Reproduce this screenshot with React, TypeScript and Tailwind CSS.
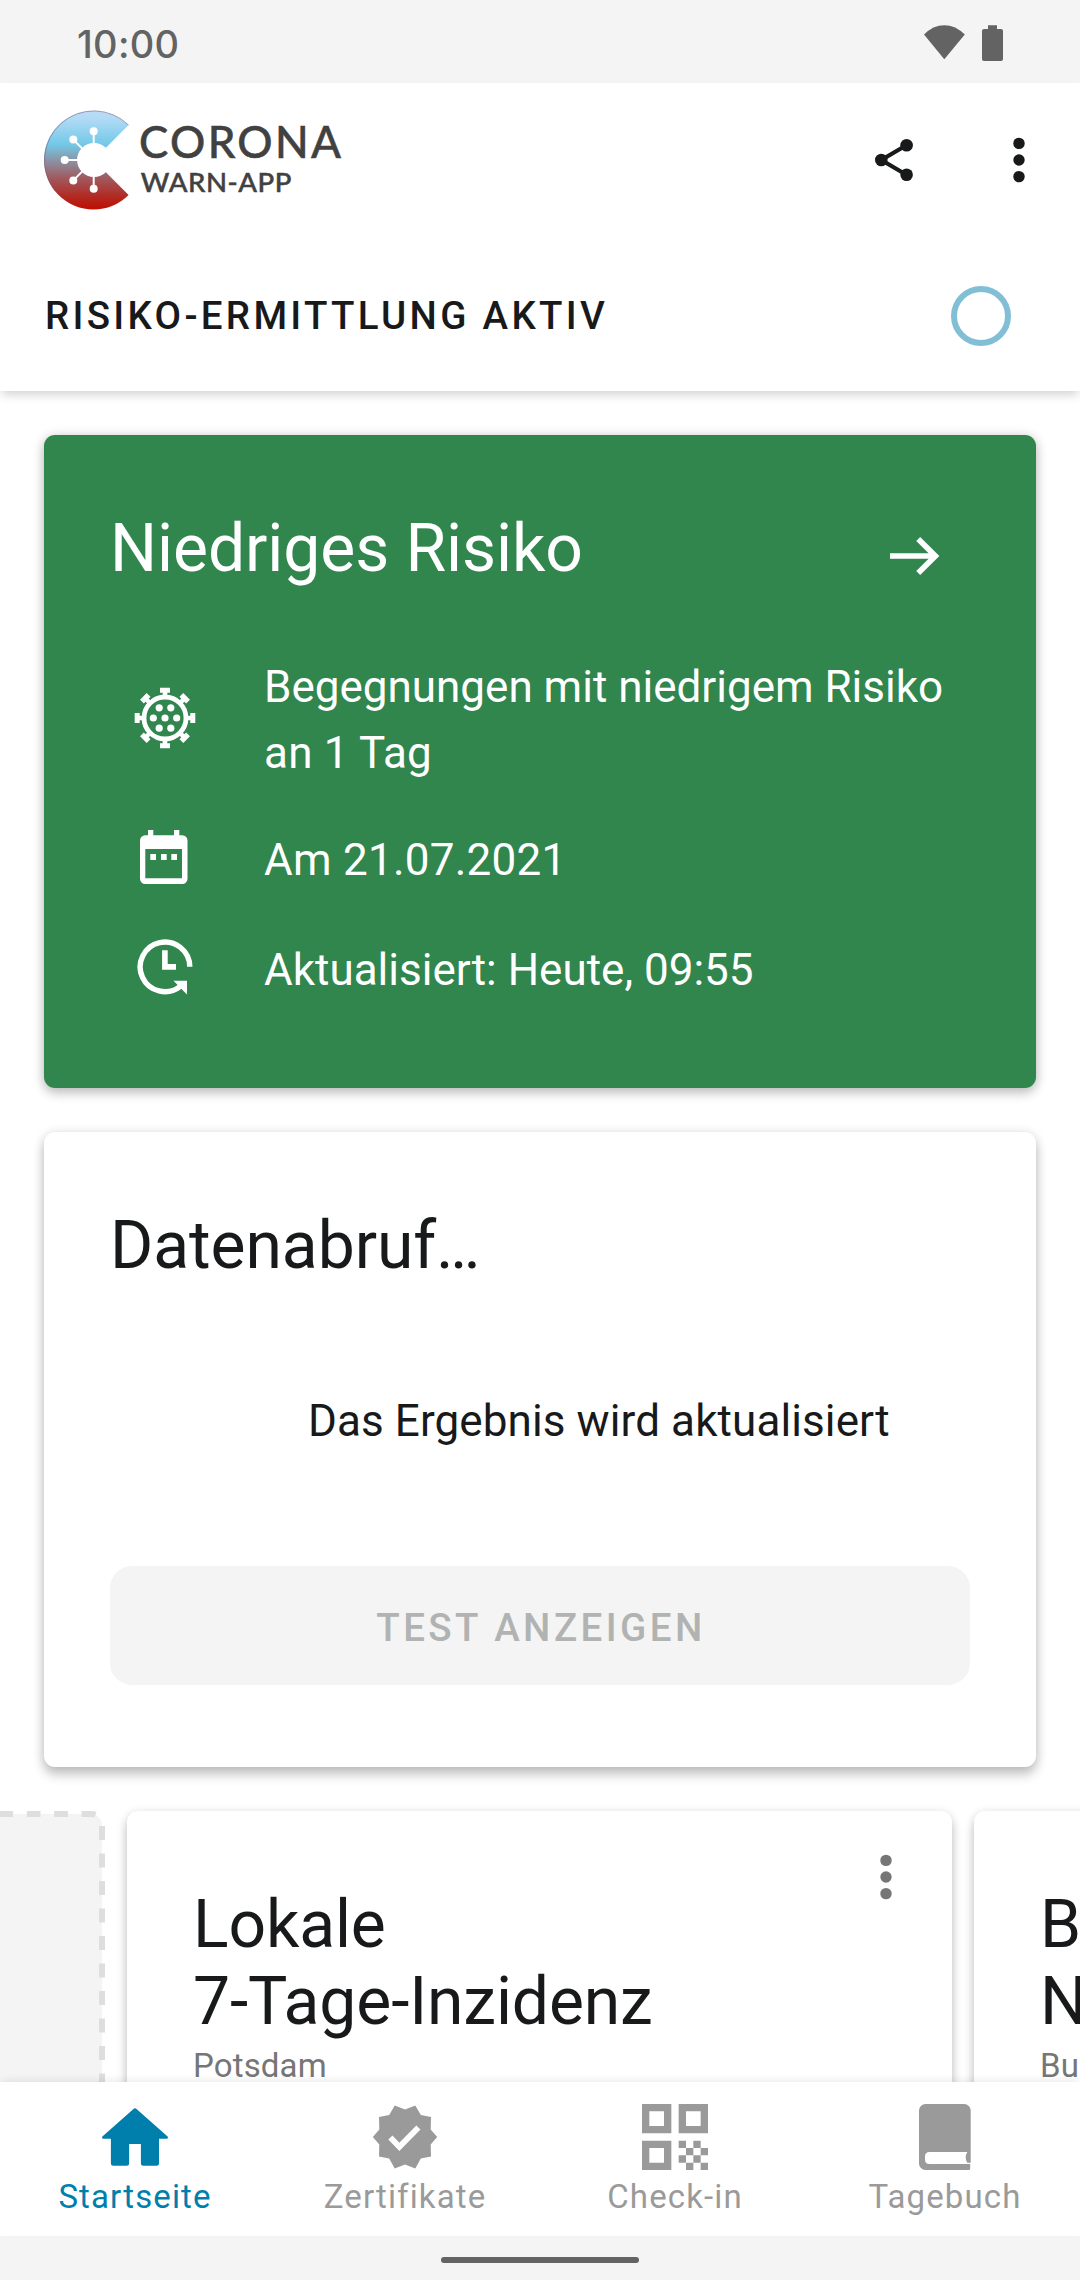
import type { ReactNode } from "react";

function StatusBar() {
  return (
    <div className="flex h-[83px] shrink-0 items-center justify-between bg-[#f4f4f4] pr-[77px] pl-[77px]">
      <span className="pt-[5px] font-[Inter,sans-serif] text-[38px] leading-[46px] font-medium tracking-[0.3px] text-[#636363]">
        10:00
      </span>
      <svg className="h-[40px] w-[80px]" viewBox="923 22 80 40" fill="#636363">
        <path d="M944.3 59.3 924 34.6Q933 25.2 944.3 25.2T964.8 34.6Z" />
        <path d="M988 25.3h9v3.6h4a2 2 0 0 1 2 2v28a2 2 0 0 1-2 2h-17a2 2 0 0 1-2-2v-28a2 2 0 0 1 2-2h4z" />
      </svg>
    </div>
  );
}

function Logo() {
  return (
    <svg className="h-[100px] w-[300px]" viewBox="44 110 300 100">
      <defs>
        <linearGradient id="logo" x1="0" y1="0" x2="0" y2="1">
          <stop offset="0" stopColor="#bcdcf8" />
          <stop offset="0.08" stopColor="#b2dbf5" />
          <stop offset="0.34" stopColor="#73c9e8" />
          <stop offset="0.5" stopColor="#8a95a8" />
          <stop offset="0.68" stopColor="#a05a60" />
          <stop offset="0.86" stopColor="#b02c25" />
          <stop offset="1" stopColor="#c00d00" />
        </linearGradient>
      </defs>
      <path
        d="M128.6 125.1A49.5 49.5 0 1 0 128.6 194.9L105.9 172.2A17 17 0 1 1 105.9 147.8Z"
        fill="url(#logo)"
      />
      <path d="M128.6 125.1A49.5 49.5 0 0 0 55 191" fill="none" stroke="#7d5068" strokeOpacity="0.6" strokeWidth="0.8" />
      <g stroke="#fff" strokeWidth="2">
        <path d="M93.7 131v14M73.3 139.6l10 10M64.7 160h14M73.3 180.4l10-10M93.7 189v-14" />
      </g>
      <g fill="#fff">
        <circle cx="93.7" cy="131.3" r="4" />
        <circle cx="73.3" cy="139.6" r="4" />
        <circle cx="64.7" cy="160" r="4" />
        <circle cx="73.3" cy="180.4" r="4" />
        <circle cx="93.7" cy="188.7" r="4" />
      </g>
      <g fill="#414141" stroke="#414141" strokeWidth="0.5" fontFamily="Lato, sans-serif" fontWeight="500">
        <text x="139" y="158" fontSize="44" textLength="202" lengthAdjust="spacing">
          CORONA
        </text>
        <text x="140.8" y="191.5" fontSize="27.5" textLength="150.6" lengthAdjust="spacing">
          WARN-APP
        </text>
      </g>
    </svg>
  );
}

function MoreIcon() {
  return (
    <svg className="size-[66px]" viewBox="0 0 66 66" fill="currentColor">
      <circle cx="33" cy="16.4" r="5.7" />
      <circle cx="33" cy="33" r="5.7" />
      <circle cx="33" cy="49.6" r="5.7" />
    </svg>
  );
}

function Header() {
  return (
    <header className="relative z-10 shrink-0 bg-white text-[#17191a] shadow-[0_6px_9px_-2px_rgba(0,0,0,0.17)]">
      <div className="flex h-[154px] items-center pr-[28px] pl-[44px]">
        <Logo />
        <svg className="ml-auto size-[66px]" viewBox="861 127 66 66" fill="currentColor">
          <path d="M906.4 145.3 881.3 160 906.4 174.7" fill="none" stroke="currentColor" strokeWidth="4.2" />
          <circle cx="906.6" cy="145.3" r="6.3" />
          <circle cx="881.3" cy="160" r="6.3" />
          <circle cx="906.6" cy="174.7" r="6.3" />
        </svg>
        <div className="ml-[59px]">
          <MoreIcon />
        </div>
      </div>
      <div className="flex h-[154px] items-center justify-between pt-[3px] pr-[69px] pl-[45px]">
        <span className="text-[38.5px] leading-[46px] font-medium tracking-[3.3px]">RISIKO-ERMITTLUNG AKTIV</span>
        <span className="size-[60px] rounded-full border-[6px] border-[#82bfd7]" />
      </div>
    </header>
  );
}

function VirusIcon() {
  return (
    <svg className="size-[66px] shrink-0" viewBox="-33 -31 66 66">
      <circle r="21" fill="none" stroke="#fff" strokeWidth="4.8" />
      <g fill="#fff">
        {[0, 45, 90, 135, 180, 225, 270, 315].map((a) => (
          <path
            key={a}
            d={a % 90 === 0 ? "M-5-30.3H5v5H2.3v4h-4.6v-4H-5z" : "M-4.7-30.6H4.7v5.4H2.2v3.5h-4.4v-3.5h-2.5z"}
            transform={`rotate(${a})`}
          />
        ))}
        <circle r="3.6" />
        <circle cx="-11.7" r="3.6" />
        <circle cx="11.7" r="3.6" />
        <circle cx="-5.8" cy="-10.2" r="3.6" />
        <circle cx="5.8" cy="-10.2" r="3.6" />
        <circle cx="-5.8" cy="10.2" r="3.6" />
        <circle cx="5.8" cy="10.2" r="3.6" />
      </g>
    </svg>
  );
}

function CalendarIcon() {
  return (
    <svg className="size-[66px] shrink-0" viewBox="132 827 66 66" fill="#fff">
      <path
        fillRule="evenodd"
        d="M148 830h5.3v5.3H174V830h5.3v5.3h3a5.2 5.2 0 0 1 5.2 5.2v38.3a5.2 5.2 0 0 1-5.2 5.2H145.2a5.2 5.2 0 0 1-5.2-5.2V840.5a5.2 5.2 0 0 1 5.2-5.2H148zM145.3 849v29.3H182V849z"
      />
      <path d="M150.3 854h5.7v6h-5.7zM161 854h5.7v6H161zM171.3 854h5.7v6h-5.7z" />
    </svg>
  );
}

function UpdateIcon() {
  return (
    <svg className="size-[66px] shrink-0" viewBox="132 937 66 66" fill="#fff">
      <path d="M189.8 966.8A24.8 24.8 0 1 0 180 986.6" fill="none" stroke="#fff" strokeWidth="5.4" />
      <path d="M173.4 980.7H187V994.4L181.8 989.2 176.2 983.6z" />
      <path d="M162.1 950.3h5.6v13.7h8.3v5.8h-13.9z" />
    </svg>
  );
}

function RiskRow({ icon, children, className }: { icon: ReactNode; children: ReactNode; className: string }) {
  return (
    <div className={`flex items-center pl-[22px] text-[44px] leading-[66px] ${className}`}>
      {icon}
      <p className="ml-[66px]">{children}</p>
    </div>
  );
}

function RiskCard() {
  return (
    <section className="h-[653px] rounded-[11px] bg-[#30864d] pt-[75px] pl-[66px] text-white shadow-[0_5px_12px_rgba(0,0,0,0.22),0_0_12px_rgba(0,0,0,0.12)]">
      <div className="flex items-start justify-between pr-[88px]">
        <h2 className="text-[66px] leading-[77px] tracking-[-0.08px]">Niedriges Risiko</h2>
        <svg className="mt-[13px] size-[66px]" viewBox="882 523 66 66" fill="none" stroke="#fff" strokeWidth="5.6">
          <path d="M890 556H936M918.2 538.9 935.4 556 918.2 573.1" />
        </svg>
      </div>
      <RiskRow className="mt-[65px]" icon={<VirusIcon />}>
        Begegnungen mit niedrigem Risiko
        <br />
        <span className="tracking-[0.2px]">an 1 Tag</span>
      </RiskRow>
      <RiskRow className="mt-[41px] tracking-[0.25px]" icon={<CalendarIcon />}>
        Am 21.07.2021
      </RiskRow>
      <RiskRow className="mt-[44px]" icon={<UpdateIcon />}>
        Aktualisiert: Heute, 09:55
      </RiskRow>
    </section>
  );
}

function TestCard() {
  return (
    <section className="mt-[44px] h-[635px] rounded-[11px] bg-white px-[66px] pt-[75px] text-[#17191a] shadow-[0_8px_12px_rgba(0,0,0,0.2),0_1px_12px_rgba(0,0,0,0.14)]">
      <h2 className="text-[66px] leading-[77px] tracking-[-0.08px]">Datenabruf…</h2>
      <p className="mt-[104px] pl-[198px] text-[44px] leading-[66px] tracking-[0.1px]">Das Ergebnis wird aktualisiert</p>
      <button className="mt-[112px] flex h-[119px] w-full items-center justify-center rounded-[22px] bg-[#f4f4f4] pt-[4px] pl-[2px] text-[38.5px] leading-[46px] font-medium tracking-[3.45px] text-[#b1b3b2]">
        TEST ANZEIGEN
      </button>
    </section>
  );
}

function StatCard({ lines, scope }: { lines: [string, string]; scope: string }) {
  return (
    <section className="w-[825px] shrink-0 rounded-[11px] bg-white pt-[33px] pl-[66px] text-[#17191a] shadow-[0_8px_12px_rgba(0,0,0,0.18),0_1px_10px_rgba(0,0,0,0.12)]">
      <div className="flex items-start justify-between pr-[33px]">
        <h2 className="pt-[42px] text-[66px] leading-[77px] tracking-[-0.15px]">
          {lines[0]}
          <br />
          {lines[1]}
        </h2>
        <div className="text-[#767676]">
          <MoreIcon />
        </div>
      </div>
      <p className="mt-[6px] text-[33px] leading-[39px] tracking-[0.15px] text-[#767676]">{scope}</p>
    </section>
  );
}

function StatCarousel() {
  return (
    <div className="mt-[44px] flex h-[460px] gap-[22px]">
      <svg className="h-[460px] w-[105px] shrink-0" viewBox="0 0 105 460">
        <path d="M0 3H91a11 11 0 0 1 11 11V460H0z" fill="#f4f4f4" />
        <path d="M0 3H91.5" stroke="#dedede" strokeWidth="6" strokeDasharray="13.7 13.7" strokeDashoffset="0.6" />
        <path d="M91 0q3.5 0 5.5 1.2L94.5 6.5 91 6z" fill="#dedede" />
        <path d="M102 15V460" stroke="#dedede" strokeWidth="6" strokeDasharray="14 13.5" />
      </svg>
      <StatCard lines={["Lokale", "7-Tage-Inzidenz"]} scope="Potsdam" />
      <StatCard lines={["Bestätigte", "Neuinfektionen"]} scope="Bundesweit" />
    </div>
  );
}

function NavItem({ label, children, className }: { label: string; children: ReactNode; className: string }) {
  return (
    <div className={`flex flex-col items-center pt-[22px] ${className}`}>
      {children}
      <span className="mt-[7px] text-[33px] leading-[39px] tracking-[1.12px]">{label}</span>
    </div>
  );
}

function BottomNav() {
  return (
    <nav className="relative z-10 grid h-[154px] shrink-0 grid-cols-4 bg-white shadow-[0_-3px_8px_-2px_rgba(0,0,0,0.1)]">
      <NavItem label="Startseite" className="text-[#007fad]">
        <svg className="size-[66px]" viewBox="102 2104 66 66" fill="currentColor">
          <path d="M133.2 2109.2a2.6 2.6 0 0 1 3.6 0L167.6 2136.4q1.2 2.3-1.2 2.3H159V2163.2q0 2.5-2.5 2.5H143.4q-2.5 0-2.5-2.5V2144H129.1V2163.2q0 2.5-2.5 2.5H113.4q-2.5 0-2.5-2.5V2138.7H103.6q-2.4 0-1.2-2.3z" />
        </svg>
      </NavItem>
      <NavItem label="Zertifikate" className="text-[#9a9a9a]">
        <svg className="size-[66px]" viewBox="-33 -33 66 66" fill="currentColor">
          <path d="M32.2 0 25.7-7.6 26-20 15.8-22.1 10.3-31.4 0-27.4-10.300-31.400-15.800-22.100-26-20-25.700-7.600-32.200 0-25.700 7.600-26 19.400-15.800 21.500-10.300 31.400 0 27.400 10.300 31.400 15.800 21.500 26 19.400 25.700 7.600z" />
          <path d="M-14.6.5-5.6 9.900 13.400-9.500" fill="none" stroke="#fff" strokeWidth="5.8" />
        </svg>
      </NavItem>
      <NavItem label="Check-in" className="text-[#9a9a9a]">
        <svg className="size-[66px]" viewBox="0 0 9 9" fill="currentColor">
          <path
            fillRule="evenodd"
            d="M0 0h4v4H0zM1 1v2h2V1zM5 0h4v4H5zM6 1v2h2V1zM0 5h4v4H0zM1 6v2h2V6z"
          />
          <path d="M5 5h1v1H5zM7 5h1v1H7zM6 6h1v1H6zM8 6h1v1H8zM5 7h1v1H5zM7 7h1v1H7zM6 8h1v1H6zM8 8h1v1H8z" />
        </svg>
      </NavItem>
      <NavItem label="Tagebuch" className="text-[#9a9a9a]">
        <svg className="size-[66px]" viewBox="911 2104 66 66" fill="currentColor">
          <path d="M924.5 2104H963.2a6.5 6.5 0 0 1 6.5 6.5V2162.800H966.300Q963 2157.400 966.300 2152H928.500Q924 2152 924 2156.500V2159.500Q924 2164 928.500 2164H969.200V2168.500Q969.200 2170 967.700 2170H924.500a6.500 6.500 0 0 1-6.500-6.500V2110.500a6.500 6.500 0 0 1 6.500-6.500z" />
        </svg>
      </NavItem>
    </nav>
  );
}

export default function App() {
  return (
    <div className="flex h-[2280px] w-[1080px] flex-col overflow-hidden bg-white font-[Roboto,sans-serif] antialiased">
      <StatusBar />
      <Header />
      <main className="min-h-0 flex-1 overflow-hidden">
        <div className="px-[44px] pt-[44px]">
          <RiskCard />
          <TestCard />
        </div>
        <StatCarousel />
      </main>
      <BottomNav />
      <div className="flex h-[44px] shrink-0 justify-center bg-[#f4f4f4] pt-[21px]">
        <div className="h-[6px] w-[198px] rounded-full bg-[#636363]" />
      </div>
    </div>
  );
}
